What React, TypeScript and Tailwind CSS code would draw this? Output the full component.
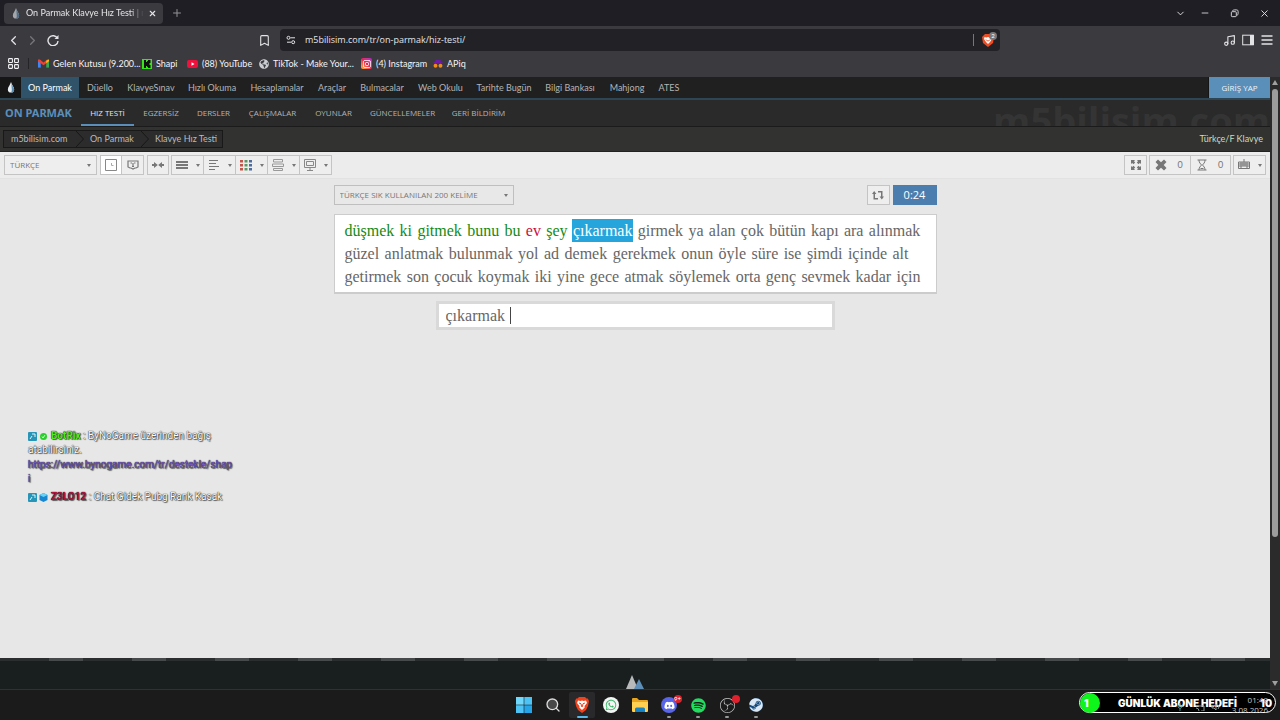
import type { ReactNode } from "react"
import {
  Bookmark,
  ChevronDown,
  ChevronLeft,
  ChevronRight,
  LayoutGrid,
  Minus,
  Music,
  Plus,
  Search,
  X,
} from "lucide-react"
import { FaDiscord, FaGlobeAmericas, FaSpotify, FaSteam, FaWhatsapp } from "react-icons/fa"
import { SiInstagram, SiObsstudio } from "react-icons/si"

const SITE_NAV = [
  { label: "Düello", width: "w-[42px]" },
  { label: "KlavyeSınav", width: "w-[60px]" },
  { label: "Hızlı Okuma", width: "w-[62px]" },
  { label: "Hesaplamalar", width: "w-[68px]" },
  { label: "Araçlar", width: "w-[42px]" },
  { label: "Bulmacalar", width: "w-[58px]" },
  { label: "Web Okulu", width: "w-[59px]" },
  { label: "Tarihte Bugün", width: "w-[68px]" },
  { label: "Bilgi Bankası", width: "w-[64px]" },
  { label: "Mahjong", width: "w-[50px]" },
  { label: "ATES", width: "w-[34px]" },
]

const SUB_NAV = [
  { label: "EGZERSİZ", width: "w-[54px]" },
  { label: "DERSLER", width: "w-[51px]" },
  { label: "ÇALIŞMALAR", width: "w-[67px]" },
  { label: "OYUNLAR", width: "w-[55px]" },
  { label: "GÜNCELLEMELER", width: "w-[83px]" },
  { label: "GERİ BİLDİRİM", width: "w-[69px]" },
]

const LINES = [
  "düşmek ki gitmek bunu bu ev şey çıkarmak girmek ya alan çok bütün kapı ara alınmak",
  "güzel anlatmak bulunmak yol ad demek gerekmek onun öyle süre ise şimdi içinde alt",
  "getirmek son çocuk koymak iki yine gece atmak söylemek orta genç sevmek kadar için",
]

const CURRENT = 7
const WRONG = [5]

const wordClass = (line: number, index: number) => {
  if (line > 0 || index > CURRENT) return "text-[#666]"
  if (index === CURRENT) return "bg-[#25a5dc] text-white ring-1 ring-[#25a5dc]"
  return WRONG.includes(index) ? "text-[#c8103c]" : "text-[#148a14]"
}

const Drop = ({ className = "" }: { className?: string }) => (
  <svg viewBox="0 0 10 14" className={className} aria-hidden="true">
    <path d="M5 0C4 4 1 6 1 9.500a4 4 0 0 0 8 0C9 6 6 4 5 0Z" fill="#e8eef2" />
    <path d="M5.500 2C6 5 9 6.500 9 9.500A4 4 0 0 1 5 13.500c2-2 .5-6 .5-11.500Z" fill="#5d8fb5" />
  </svg>
)

const Caret = () => (
  <svg viewBox="0 0 4 3" className="h-[3px] w-1" aria-hidden="true">
    <path d="M0 0h4L2 3Z" fill="#777" />
  </svg>
)

const TabStrip = () => (
  <div className="flex h-[26px] items-center bg-[#1f1e24] pl-1 text-[#e6e6e8]">
    <div className="flex h-[21px] w-[159px] items-center rounded bg-[#3b3a3f] pl-2">
      <Drop className="h-[11px] w-2 opacity-60" />
      <span className="ml-1.5 w-[118px] whitespace-nowrap [mask-image:linear-gradient(90deg,#000_88%,transparent)]">
        On Parmak Klavye Hız Testi | m5
      </span>
      <button type="button" aria-label="Sekmeyi kapat" className="ml-1">
        <X size={9} strokeWidth={3} />
      </button>
    </div>
    <button type="button" aria-label="Yeni sekme" className="ml-2 text-[#929296]">
      <Plus size={12} />
    </button>
    <div className="ml-auto flex items-center gap-[18px] pr-2.5">
      <button type="button" aria-label="Sekme ara"><ChevronDown size={11} /></button>
      <button type="button" aria-label="Küçült" className="-ml-1"><Minus size={10} /></button>
      <button type="button" aria-label="Geri yükle" className="pl-0.5">
        <svg viewBox="0 0 10 10" className="size-[9px]" fill="none" stroke="currentColor">
          <rect x="1.500" y="3" width="5.500" height="5.500" rx="1" />
          <path d="M3 2.500C3 1 4 1 5 1h2c1.500 0 2 .5 2 2v2c0 1-.5 2-1.500 2" />
        </svg>
      </button>
      <button type="button" aria-label="Kapat" className="pl-0.5"><X size={11} /></button>
    </div>
  </div>
)

const AddressBar = () => (
  <div className="flex h-7 items-center justify-between bg-[#3b3a3f] text-[#e4e4e6]">
    <div className="flex w-[280px] shrink-0 items-center gap-1 pr-[9px] pl-1.5">
      <button type="button" aria-label="Geri"><ChevronLeft size={15} /></button>
      <button type="button" aria-label="İleri" className="text-[#77777b]"><ChevronRight size={15} /></button>
      <button type="button" aria-label="Yenile" className="ml-[3px]">
        <svg viewBox="0 0 12 12" className="size-3" fill="none" stroke="currentColor" strokeWidth="1.400">
          <path d="M10.500 4.500A5 5 0 1 0 11 7" />
          <path d="M11.500 1v4h-4Z" fill="currentColor" stroke="none" />
        </svg>
      </button>
      <button type="button" aria-label="Yer işareti" className="ml-auto"><Bookmark size={13} /></button>
    </div>
    <div className="flex h-[22px] min-w-0 flex-1 items-center rounded bg-[#222126] pr-px pl-1.5">
      <svg viewBox="0 0 10 10" className="size-[10px]" fill="none" stroke="currentColor">
        <circle cx="2.500" cy="2.800" r="1.500" />
        <path d="M4.500 2.800H9M1 7.200h4" />
        <circle cx="7.200" cy="7.200" r="1.500" />
      </svg>
      <input
        aria-label="Adres"
        defaultValue="m5bilisim.com/tr/on-parmak/hiz-testi/"
        className="ml-[9px] min-w-0 flex-1 bg-transparent font-['Open_Sans',sans-serif] text-[9px] outline-none"
      />
      <span className="h-3 w-px bg-[#77777b]" />
      <button type="button" aria-label="Brave Shields" className="relative ml-2 flex w-[17px]">
        <svg viewBox="0 0 12 13" className="h-[13px] w-3">
          <path d="M3 0h6l3 3-1 6-5 4-5-4-1-6Z" fill="#ee4c22" />
          <path d="m2.500 3 2 .5L6 3l1.500.5 2-.5.5 2-2 3-2 2-2-2-2-3Z" fill="#fff" />
          <path d="M4 5.500 5.500 7h1L8 5.500" stroke="#ee4c22" fill="none" />
        </svg>
        <span className="absolute -top-0.5 right-0.5 flex size-2 items-center justify-center rounded-full bg-[#77777c] text-[6px] text-white">2</span>
      </button>
    </div>
    <div className="flex w-[280px] shrink-0 items-center justify-end gap-[7px] pr-[7px]">
      <button type="button" aria-label="Müzik"><Music size={13} /></button>
      <button type="button" aria-label="Kenar çubuğu" className="-ml-px">
        <svg viewBox="0 0 12 12" className="size-3">
          <rect x=".7" y="1.200" width="10.600" height="9.600" fill="none" stroke="currentColor" />
          <path d="M8 1h4v10H8Z" fill="currentColor" />
        </svg>
      </button>
      <button type="button" aria-label="Menü">
        <svg viewBox="0 0 12 12" className="size-3"><path d="M.5 2h11M.5 6h11M.5 10h11" stroke="currentColor" strokeWidth="1.300" /></svg>
      </button>
    </div>
  </div>
)

const BookmarkLink = ({ icon, label, width }: { icon: ReactNode; label: string; width: string }) => (
  <a href="#" className={`flex shrink-0 items-center gap-1 whitespace-nowrap ${width}`}>
    {icon}
    {label}
  </a>
)

const Bookmarks = () => (
  <div className="flex h-[23px] items-center bg-[#3b3a3f] pb-1 pl-[7px] text-[#f4f4f6]">
    <button type="button" aria-label="Uygulamalar"><LayoutGrid size={13} /></button>
    <span className="mr-[9px] ml-2 h-[11px] w-px bg-[#252528]" />
    <BookmarkLink
      width="w-[104px]"
      label="Gelen Kutusu (9.200..."
      icon={
        <svg viewBox="0 0 12 9" className="h-[9px] w-[11px] shrink-0">
          <path d="M0 1v8h3V1Z" fill="#4285f4" />
          <path d="M9 1v8h3V1Z" fill="#34a853" />
          <path d="M0 0h2l4 3.500L10 0h2v2L6 6.500 0 2Z" fill="#ea4335" />
          <path d="M9 1.500 12 0v2L9 4.300Z" fill="#fbbc04" />
        </svg>
      }
    />
    <BookmarkLink
      width="w-[45px]"
      label="Shapi"
      icon={
        <svg viewBox="0 0 10 10" className="size-[10px] shrink-0">
          <path d="M0 0h10v10H0Z" fill="#37e51c" />
          <path d="M2 1h2v2h1V2h1V1h2.500v3h-1v2h1v3H6V8H5V7H4v2H2Z" fill="#111" />
        </svg>
      }
    />
    <BookmarkLink
      width="w-[72px]"
      label="(88) YouTube"
      icon={
        <svg viewBox="0 0 11 8" className="h-2 w-[11px] shrink-0">
          <rect width="11" height="8" rx="2" fill="#f0103c" />
          <path d="m4.500 2.200 3 1.800-3 1.800Z" fill="#fff" />
        </svg>
      }
    />
    <BookmarkLink width="w-[102px]" label="TikTok - Make Your..." icon={<FaGlobeAmericas size={10} className="shrink-0 text-[#c9ccd0]" />} />
    <BookmarkLink
      width="w-[72px]"
      label="(4) Instagram"
      icon={
        <span className="flex size-[11px] shrink-0 items-center justify-center rounded-xs bg-linear-to-tr from-[#ffb52e] via-[#ed1b58] to-[#a426c8] text-white">
          <SiInstagram size={8} />
        </span>
      }
    />
    <BookmarkLink
      width="w-[50px]"
      label="APiq"
      icon={
        <svg viewBox="0 0 10 9" className="h-2 w-[10px] shrink-0">
          <path d="M0 2h10v2H0ZM2 0h6v2H2Z" fill="#6d1aa8" />
          <circle cx="2.200" cy="6.500" r="2.200" fill="#f08b1c" />
          <circle cx="7.800" cy="6.500" r="2.200" fill="#f08b1c" />
        </svg>
      }
    />
  </div>
)

const Crumb = () => (
  <svg viewBox="0 0 8 16" className="h-4 w-2" fill="none" stroke="#171717" aria-hidden="true">
    <path d="m0 0 7.500 8L0 16" />
  </svg>
)

const SiteHeader = () => (
  <header className="text-[#b4b4b4]">
    <nav className="flex h-[23px] items-stretch border-b-2 border-[#2d4656] bg-[#202020]">
      <a href="#" aria-label="m5bilisim" className="flex w-[21px] items-center justify-center bg-[#161616]">
        <Drop className="h-[11px] w-2" />
      </a>
      <a href="#" className="flex w-[58px] items-center justify-center bg-[#31536a] text-white">On Parmak</a>
      {SITE_NAV.map(({ label, width }) => (
        <a key={label} href="#" className={`flex items-center justify-center whitespace-nowrap ${width}`}>
          {label}
        </a>
      ))}
      <a href="#" className="ml-auto flex w-[62px] items-center justify-center border-l border-[#151515] bg-[#598fb9] font-['Open_Sans',sans-serif] text-[8px] text-[#f0f4f7]">GİRİŞ YAP</a>
    </nav>
    <nav className="relative flex h-[27px] items-stretch overflow-hidden border-b border-[#1b1b1b] bg-[#2a2a2a] font-['Open_Sans',sans-serif] text-[8px]">
      <span className="absolute -top-1 right-0 text-[38px] leading-[48px] font-bold text-[#343434]">m5bilisim.com</span>
      <h1 className="flex w-[81px] items-center pl-[5px] font-['Noto_Sans','Open_Sans',sans-serif] text-[11px] font-bold whitespace-nowrap text-[#5b8fba]">ON PARMAK</h1>
      <a href="#" className="flex w-[53px] items-center justify-center border-b-2 border-[#5b8fba] pt-0.5 whitespace-nowrap text-[#e4e4e4]">HIZ TESTİ</a>
      {SUB_NAV.map(({ label, width }) => (
        <a key={label} href="#" className={`flex items-center justify-center whitespace-nowrap ${width}`}>
          {label}
        </a>
      ))}
    </nav>
    <div className="flex h-[25px] items-center justify-between border-b border-[#222] bg-[#323231] pr-[7px] pl-[3px]">
      <nav aria-label="Konum" className="flex h-[18px] items-center border border-[#191919] bg-[#2c2c2c] text-[#bbb]">
        <a href="#" className="w-[72px] pl-[7px]">m5bilisim.com</a>
        <Crumb />
        <a href="#" className="w-[57px] pl-1.5">On Parmak</a>
        <Crumb />
        <a href="#" className="w-[73px] pl-1.5 whitespace-nowrap">Klavye Hız Testi</a>
      </nav>
      <span className="text-[#cfdcbc]">Türkçe/F Klavye</span>
    </div>
  </header>
)

const Tool = ({ label, active, width, caret, children }: { label: string; active?: boolean; width: string; caret?: boolean; children: ReactNode }) => (
  <button
    type="button"
    aria-label={label}
    className={`-ml-px flex h-5 items-center justify-center gap-2 border border-[#c4c4c4] text-[#777] ${width} ${active ? "bg-white" : "bg-[#eee]"}`}
  >
    {children}
    {caret && <Caret />}
  </button>
)

const Glyph = ({ children, fill = false }: { children: ReactNode; fill?: boolean }) => (
  <svg viewBox="0 0 12 12" className="size-3 shrink-0" fill={fill ? "#777" : "none"} stroke={fill ? "none" : "#777"} aria-hidden="true">
    {children}
  </svg>
)

const Toolbar = () => (
  <div className="flex h-[27px] items-center gap-[3px] border-b border-[#e2e2e2] bg-[#ececec] px-1">
    <label className="relative flex items-center">
      <select aria-label="Dil" className="h-5 w-[93px] appearance-none border border-[#c4c4c4] bg-[#eee] pl-[5px] font-['Open_Sans',sans-serif] text-[8px] text-[#777]">
        <option>TÜRKÇE</option>
      </select>
      <span className="pointer-events-none absolute right-1.5"><Caret /></span>
    </label>
    <div className="flex pl-px">
      <Tool label="Süre" width="w-[22px]" active>
        <svg viewBox="0 0 12 12" className="size-3 shrink-0" fill="none" stroke="#888" aria-hidden="true">
          <path d="M.5.5h11v11H.5Z" />
          <path d="M6.500 4v2.500h2" stroke="#aaa" />
        </svg>
      </Tool>
      <Tool label="Kelime sayısı" width="w-[23px]">
        <Glyph><path d="M1 2h10v6l-2 1H8L6 10 4 9H3L1 8ZM3.500 4H5M7 4h1.500M6 4v4M5 7.500h2" strokeWidth="1.200" /></Glyph>
      </Tool>
    </div>
    <div className="flex pl-px">
      <Tool label="Genişlik" width="w-[22px]">
        <Glyph fill><path d="M0 5h2V3l3.800 3L2 9V7H0ZM12 5h-2V3L6.200 6 10 9V7h2Z" /></Glyph>
      </Tool>
    </div>
    <div className="flex">
      <Tool label="Satır" width="w-[33px]" caret>
        <Glyph fill><path d="M0 2h12v2H0ZM0 5h12v2H0ZM0 8h12v2H0Z" /></Glyph>
      </Tool>
      <Tool label="Hizalama" width="w-[33px]" caret>
        <Glyph><path d="M1 1.500h9M1 4.500h7M1 7.500h10M1 10.500h6" /></Glyph>
      </Tool>
      <Tool label="Renkler" width="w-[33px]" caret>
        <Glyph fill>
          <path d="M0 1h3v2.500H0ZM0 5h3v2.500H0ZM0 9h3v2.500H0Z" fill="#c4554a" />
          <path d="M4.500 1h3v2.500h-3ZM4.500 5h3v2.500h-3ZM4.500 9h3v2.500h-3Z" fill="#5e9668" />
          <path d="M9 1h3v2.500H9ZM9 5h3v2.500H9ZM9 9h3v2.500H9Z" fill="#4c6d9e" />
        </Glyph>
      </Tool>
      <Tool label="Yerleşim" width="w-[33px]" caret>
        <Glyph><path d="M1.500.5h9v2.500h-9ZM.5 5h11v2.500H.5ZM1.500 9.500h9v2h-9Z" stroke="#999" /></Glyph>
      </Tool>
      <Tool label="Görünüm" width="w-[33px]" caret>
        <Glyph><path d="M.5.5h11v8H.5ZM2.500 2.500h7v4h-7ZM6 8.500V11M3 11.500h6" stroke="#888" /></Glyph>
      </Tool>
    </div>
    <div className="ml-auto flex">
      <Tool label="Tam ekran" width="w-[23px]">
        <Glyph fill><path d="M1 1h4L4 2.200l1.200 1.300-1.700 1.700L2.200 4 1 5ZM11 1v4L9.800 4 8.500 5.200 6.800 3.500 8 2.200 7 1ZM1 11V7l1.200 1 1.300-1.200 1.700 1.700L4 9.800 5 11ZM11 11H7l1-1.200-1.200-1.300 1.700-1.700L9.800 8 11 7Z" /></Glyph>
      </Tool>
    </div>
    <div className="flex">
      <Tool label="Yanlış" width="w-[42px]">
        <Glyph fill><path d="m3 .5 3 2.800L9 .5 11.500 3 8.700 6l2.800 3L9 11.500 6 8.700l-3 2.800L.5 9l2.800-3L.5 3Z" /></Glyph>
        <span className="px-0.5">0</span>
      </Tool>
      <Tool label="Kalan" width="w-[41px]">
        <Glyph><path d="M1.500 1h9M1.500 11h9M3 1c0 3 1.500 3.500 2.500 5C4.500 7.500 3 8 3 11M9 1c0 3-1.500 3.500-2.500 5C7.500 7.500 9 8 9 11M4.500 9.500h3" /></Glyph>
        <span className="px-0.5">0</span>
      </Tool>
    </div>
    <div className="flex">
      <Tool label="Klavye" width="w-[33px]" caret>
        <Glyph><path d="M.5 3h11v6.500H.5ZM.5 5h11M.5 7h11M3 3v4M5 3v4M7 3v4M9 3v4M3 7v2M9 7v2M6 0v3" /></Glyph>
      </Tool>
    </div>
  </div>
)

const TypingTest = () => (
  <main className="mx-auto flex w-full max-w-[603px] flex-col pt-1.5">
    <div className="flex items-center justify-between">
      <label className="relative flex items-center">
        <select aria-label="Kelime listesi" className="h-5 w-[180px] appearance-none border border-[#bfbfbf] bg-[#e8e8e8] pl-[5px] font-['Open_Sans',sans-serif] text-[8px] text-[#777]">
          <option>TÜRKÇE SIK KULLANILAN 200 KELİME</option>
        </select>
        <span className="pointer-events-none absolute right-1.5"><Caret /></span>
      </label>
      <div className="flex gap-[3px]">
        <Tool label="Yeniden başlat" width="w-[23px]">
          <Glyph fill><path d="M0 5 2.200 2l2.200 3H3v4h3v1.500H1.500V5ZM12 7.500 9.800 10.500 7.600 7.500H9v-4H6V2h4.500v5.500Z" /></Glyph>
        </Tool>
        <span className="flex h-5 w-11 items-center justify-center bg-[#4b7eae] font-['Open_Sans',sans-serif] text-[11px] text-white">0:24</span>
      </div>
    </div>
    <div className="mt-[9px] flex flex-col border border-b-2 border-[#ccc] bg-white py-1 pr-[15px] pl-[10px] font-['Liberation_Serif',serif] text-[16px] leading-[21px]">
      {LINES.map((line, i) => (
        <p key={line} className={`flex flex-wrap justify-between py-px ${i === 1 ? "pr-3" : ""}`}>
          {line.split(" ").map((word, j) => (
            <span key={word} className={wordClass(i, j)}>{word}</span>
          ))}
        </p>
      ))}
    </div>
    <div className="relative mx-auto mt-[10px] w-[393px] max-w-full ring-3 ring-[#d9d9d9]">
      <input
        aria-label="Yazı alanı"
        defaultValue="çıkarmak "
        className="h-[23px] w-full bg-white pl-[7px] font-['Liberation_Serif',serif] text-[16px] text-[#666] caret-transparent outline-none"
      />
      <span className="absolute top-[3px] left-[71px] h-[17px] w-px bg-[#444]" />
    </div>
  </main>
)

const ChatBadge = () => (
  <svg viewBox="0 0 9 9" className="inline size-[9px]" aria-hidden="true">
    <rect width="9" height="9" rx="1" fill="#2795b8" />
    <path d="m2 7 2-3M4 2h3v3" stroke="#dff4fa" fill="none" />
  </svg>
)

const Chat = () => (
  <aside className="absolute top-[429px] left-[28px] w-[206px] font-['Roboto',sans-serif] text-[10px] leading-[14px] text-white [text-shadow:0_0_1px_#222,0_0_1px_#222,1px_1px_1px_#666]">
    <p>
      <ChatBadge />{" "}
      <svg viewBox="0 0 9 9" className="inline size-[9px]"><circle cx="4.500" cy="4.500" r="3.500" fill="#25d326" /><path d="m3 4.500 1 1.500 2-3" stroke="#eee" fill="none" /></svg>{" "}
      <b className="text-[#52ee1c]">BotRix</b> : ByNoGame üzerinden bağış atabilirsiniz.
    </p>
    <a href="#" className="block pt-px break-all text-[#7657bd]">https://www.bynogame.com/tr/destekle/shapi</a>
    <p className="pt-1">
      <ChatBadge />{" "}
      <svg viewBox="0 0 9 9" className="inline size-[9px]"><path d="m4.500 0 4 2v5l-4 2-4-2V2Z" fill="#1687d0" /><path d="m.5 2 4 2 4-2-4-2Z" fill="#69d2f5" /></svg>{" "}
      <b className="text-[#b0123c]">Z3LO12</b> : Chat Gidek Pubg Rank Kasak
    </p>
  </aside>
)

const ScrollBar = () => (
  <div className="flex w-[10px] shrink-0 flex-col items-center bg-[#2b2b2c] py-[3px]" aria-hidden="true">
    <svg viewBox="0 0 6 5" className="h-[5px] w-1.5"><path d="m3 0 3 5H0Z" fill="#a0a0a0" /></svg>
    <span className="mt-1 h-[74%] w-1.5 rounded-full bg-[#9c9c9c]" />
    <svg viewBox="0 0 6 5" className="mt-auto h-[5px] w-1.5"><path d="m3 5 3-5H0Z" fill="#a0a0a0" /></svg>
  </div>
)

const APPS = [
  {
    name: "Başlat",
    icon: (
      <svg viewBox="0 0 16 16" className="size-4">
        <path d="M0 0h7.700v7.700H0Z" fill="#6fd7fb" />
        <path d="M8.300 0H16v7.700H8.300ZM0 8.300h7.700V16H0Z" fill="#4cc2f5" />
        <path d="M8.300 8.300H16V16H8.300Z" fill="#25a5e8" />
      </svg>
    ),
  },
  { name: "Ara", icon: <Search size={16} className="text-[#ddd]" fill="#484848" /> },
  {
    name: "Brave",
    active: true,
    icon: (
      <svg viewBox="0 0 14 16" className="h-4 w-[14px]">
        <path d="M4 0h6l1.500 1.500h1.300L14 4l-1 5-2 4-4 3-4-3-2-4-1-5 1.200-2.500h1.300Z" fill="#f0421c" />
        <path d="m3 3.500 2.500.5L7 3.500 8.500 4l2.500-.5L12 6l-2.500 3 .2 1.500L7 13l-2.700-2.500.2-1.500L2 6Z" fill="#fff" />
        <path d="m4 6 2 .7.500 2.300L7 10l.5-1L8 6.700 10 6" stroke="#f0421c" fill="none" />
      </svg>
    ),
  },
  { name: "WhatsApp", icon: <span className="flex size-4 items-center justify-center rounded-full bg-[#f4f4f4]"><FaWhatsapp size={12} className="text-[#35b865]" /></span> },
  {
    name: "Dosya Gezgini",
    icon: (
      <svg viewBox="0 0 16 14" className="h-[14px] w-4">
        <path d="M0 1q0-1 1-1h4l2 2h8q1 0 1 1v3H0Z" fill="#e9a520" />
        <path d="M0 4h16v9q0 1-1 1H1q-1 0-1-1Z" fill="#ffd052" />
        <path d="M3 14v-3q0-1.500 1.500-1.500h7Q13 9.500 13 11v3Z" fill="#1684c4" />
      </svg>
    ),
  },
  { name: "Discord", running: true, badge: "9+", icon: <span className="flex size-4 items-center justify-center rounded-full bg-[#5865e8]"><FaDiscord size={11} className="text-white" /></span> },
  { name: "Spotify", running: true, icon: <FaSpotify size={15} className="text-[#25da60]" /> },
  { name: "OBS Studio", running: true, badge: " ", icon: <SiObsstudio size={15} className="text-[#c8c8c8]" /> },
  {
    name: "Steam",
    running: true,
    icon: (
      <span className="rounded-full bg-[#174a7c]">
        <FaSteam size={14} className="text-[#d9e8f4]" />
      </span>
    ),
  },
]

const Taskbar = () => (
  <footer className="relative flex h-[31px] items-stretch justify-center border-t border-[#303232] bg-[#1b1b1c]">
    {APPS.map(({ name, icon, active, running, badge }) => (
      <button
        key={name}
        type="button"
        aria-label={name}
        className="relative flex w-[29px] items-center justify-center"
      >
        <span className={`flex h-[26px] w-[26px] items-center justify-center rounded-xs ${active ? "bg-[#29292b]" : ""}`}>{icon}</span>
        {badge && (
          <span className="absolute top-[5px] right-0.5 flex size-2 items-center justify-center rounded-full bg-[#e0202c] text-[6px] text-white">{badge}</span>
        )}
        {active && <span className="absolute bottom-0.5 h-0.5 w-[11px] rounded-full bg-[#59b9ec]" />}
        {running && <span className="absolute bottom-0.5 h-0.5 w-1 rounded-full bg-[#999]" />}
      </button>
    ))}
    <div className="absolute top-0.5 right-1 flex h-[21px] w-[197px] items-center rounded-full border border-white bg-black font-['Inter',sans-serif] text-[10px] font-black whitespace-nowrap text-white">
      <span className="flex size-5 shrink-0 items-center rounded-full bg-[#0ef51c] pl-1">1</span>
      <span className="flex-1 pl-[18px]">GÜNLÜK ABONE HEDEFİ</span>
      <span className="pr-[3px]">10</span>
    </div>
    <div className="absolute top-[5px] right-3 flex flex-col items-end font-['Open_Sans',sans-serif] text-[8px] leading-[10px] text-[#c4c4c4]">
      <time>01:48</time>
      <time>3.08.2026</time>
    </div>
    <svg viewBox="0 0 44 8" className="absolute top-[13px] right-[60px] h-2 w-11" fill="none" stroke="#8b9695" aria-hidden="true">
      <path d="M4 0v4M2 2v2q2 3 4 0V2M4 5v3" stroke="#3d8580" />
      <path d="M20 3h8v5h-3M20 5q3 0 3 3M36 3h2l2-2v6l-2-2h-2ZM42 2q2 2 0 4" />
    </svg>
  </footer>
)

export default function App() {
  return (
    <div className="relative flex min-h-screen flex-col bg-[#1b1b1c] font-['Lato','Open_Sans',sans-serif] text-[9px] leading-[12px]">
      <TabStrip />
      <AddressBar />
      <Bookmarks />
      <div className="flex flex-1">
        <div className="flex min-w-0 flex-1 flex-col bg-[#e7e7e7]">
          <SiteHeader />
          <Toolbar />
          <TypingTest />
          <div className="mt-auto bg-[#191e1f]">
            <div className="h-[3px] bg-[repeating-linear-gradient(90deg,#2a2e2f_0_49px,#474a4b_49px_83px)]" />
            <svg viewBox="0 0 18 14" className="mx-auto mt-[14px] h-[14px] w-[18px]" aria-hidden="true">
              <path d="m6 0 6 14H0Z" fill="#b7b9ba" />
              <path d="m13 4 5 10H8Z" fill="#5d8fb9" />
            </svg>
          </div>
        </div>
        <ScrollBar />
      </div>
      <Taskbar />
      <Chat />
    </div>
  )
}
